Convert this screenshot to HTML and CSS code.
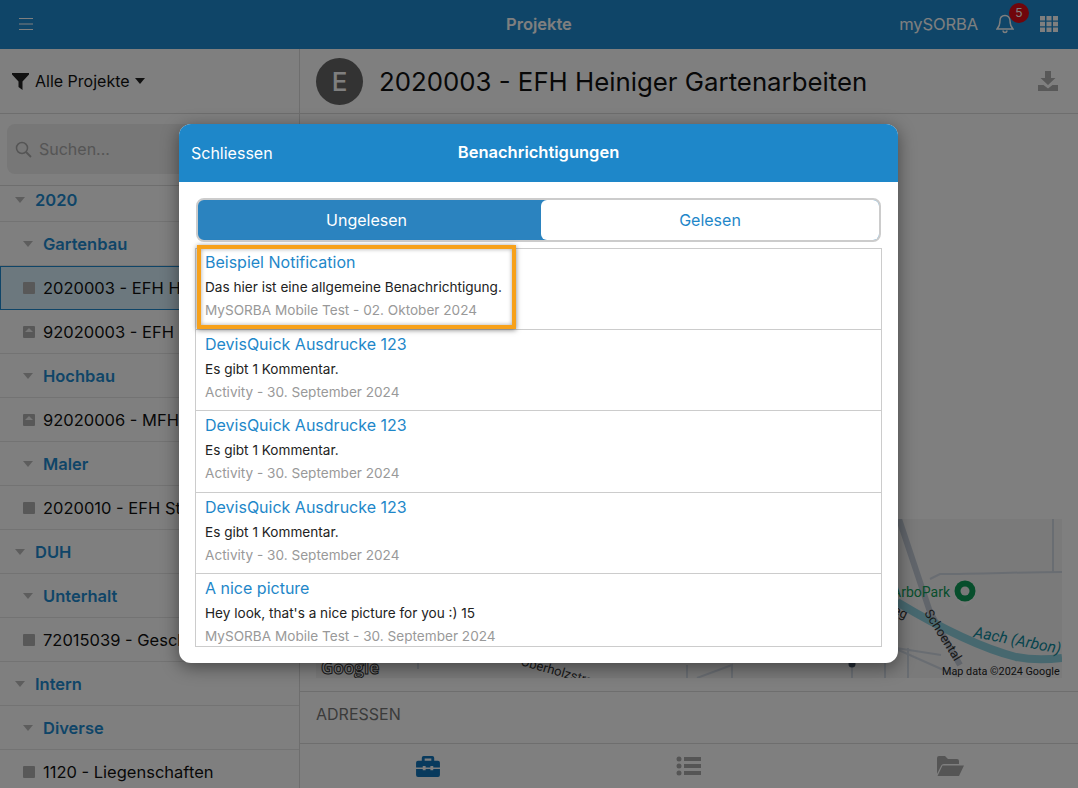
FILE: index.html
```html
<!DOCTYPE html>
<html lang="de">
<head>
<meta charset="utf-8">
<title>Projekte</title>
<link rel="stylesheet" href="styles.css">
</head>
<body>
<div class="app">
  <header class="topbar">
    <svg class="ic-menu" viewBox="0 0 14 12" width="14" height="12"><path d="M0 .5h14M0 6h14M0 11.5h14" stroke="#fff" stroke-width="1" fill="none"/></svg>
    <div class="topbar-title">Projekte</div>
    <div class="topbar-right">
      <span class="brand">mySORBA</span>
      <span class="bell">
        <svg viewBox="0 0 18 20" width="18" height="20"><path d="M9 1.500c-3.200 0-5 2.400-5 5.300 0 4.400-1 6-3 8.200h16c-2-2.200-3-3.800-3-8.200 0-2.900-1.800-5.300-5-5.300zM6.800 16.500c.3 1.300 1.200 2 2.200 2s1.900-.7 2.200-2" fill="none" stroke="#fff" stroke-width="1.400"/></svg>
        <span class="badge">5</span>
      </span>
      <svg class="ic-grid" viewBox="0 0 18 16" width="18" height="16"><path fill="#fff" d="M0 0h5v4.400H0zM6.500 0h5v4.400h-5zM13 0h5v4.400h-5zM0 5.800h5v4.400H0zM6.500 5.800h5v4.400h-5zM13 5.800h5v4.400h-5zM0 11.600h5V16H0zM6.500 11.600h5V16h-5zM13 11.600h5V16h-5z"/></svg>
    </div>
  </header>
  <div class="main">
    <aside class="sidebar">
      <div class="filter">
        <svg viewBox="0 0 17 17" width="17" height="17"><path fill="#222" d="M0 0h17v1.500L10.500 8.500V17L6.500 14V8.500L0 1.500z"/></svg>
        <span>Alle Projekte</span>
        <i class="caret"></i>
      </div>
      <div class="searchbar">
        <div class="searchbox">
          <svg viewBox="0 0 17 17" width="17" height="17"><circle cx="7" cy="7" r="5.500" fill="none" stroke="#aaa" stroke-width="1.500"/><path d="M11 11l5 5" stroke="#aaa" stroke-width="1.800"/></svg>
          <span>Suchen...</span>
        </div>
      </div>
      <ul class="tree">
        <li class="row l0"><i class="tri"></i><b>2020</b></li>
        <li class="row l1"><i class="tri"></i><b>Gartenbau</b></li>
        <li class="row l2 selected"><i class="sq"></i><span>2020003 - EFH Heiniger Gartenarbeiten</span></li>
        <li class="row l2"><i class="sq up"></i><span>92020003 - EFH Heiniger</span></li>
        <li class="row l1"><i class="tri"></i><b>Hochbau</b></li>
        <li class="row l2"><i class="sq up"></i><span>92020006 - MFH</span></li>
        <li class="row l1"><i class="tri"></i><b>Maler</b></li>
        <li class="row l2"><i class="sq"></i><span>2020010 - EFH St</span></li>
        <li class="row l0"><i class="tri"></i><b>DUH</b></li>
        <li class="row l1"><i class="tri"></i><b>Unterhalt</b></li>
        <li class="row l2"><i class="sq"></i><span>72015039 - Gesch</span></li>
        <li class="row l0"><i class="tri"></i><b>Intern</b></li>
        <li class="row l1"><i class="tri"></i><b>Diverse</b></li>
        <li class="row l2"><i class="sq"></i><span>1120 - Liegenschaften</span></li>
      </ul>
    </aside>
    <section class="detail">
      <div class="detail-head">
        <div class="avatar">E</div>
        <h1>2020003 - EFH Heiniger Gartenarbeiten</h1>
        <svg class="ic-dl" viewBox="0 0 20 20" width="20" height="20"><path fill="#b0b0b0" d="M7 0h6v7h4.500L10 14 2.500 7H7zM0 14h5.500L10 17.500 14.500 14H20v6H0z"/></svg>
      </div>
      <div class="detail-body">
        <div class="map">
          <svg viewBox="0 0 746 159" width="746" height="159">
            <rect width="746" height="159" fill="#f4f4f5"/>
            <path class="map-thin" d="M737 0v53M746 53c-40 0-80 2-122 2l-10 5M592 129v30M569 141v18M580 129l45 7M102 130v20M381 159l35-13v13M371 146v13M536 145v14M569 125l72 32"/>
            <path class="map-road-line" d="M583 0l31 93 30 53"/>
            <path class="map-river" d="M581 83c40 24 80 45 119 55 15 3 30 3 46 1"/>
            <text x="634" y="78" text-anchor="end" class="map-park">ArboPark</text>
            <path d="M639 78a11 11 0 1 1 20 0l-10 10z" fill="#fff" opacity=".5"/>
            <circle cx="649" cy="72" r="10.500" fill="#0f9d58"/><circle cx="649" cy="72" r="4.500" fill="#f0f0f0"/>
            <text class="map-water" transform="translate(657 118) rotate(11)">Aach (Arbon)</text>
            <text class="map-road" transform="translate(608 94) rotate(58)">Schoental</text>
            <text class="map-road" transform="translate(204 146) rotate(16)">Oberholzstrasse</text>
            <text class="map-road" x="589" y="100" text-anchor="end" transform="rotate(25 589 100)">Weg</text>
            <circle cx="536" cy="145" r="3.500" fill="#456"/>
            <text class="map-google" x="5" y="155">Google</text>
            <text class="map-copy" x="626" y="156">Map data ©2024 Google</text>
          </svg>
        </div>
      </div>
      <div class="addr">ADRESSEN</div>
      <nav class="tabs">
        <svg class="ic-tool" viewBox="0 0 25 22" width="24" height="21"><path fill="#1174ba" d="M8 0h9a2 2 0 0 1 2 2v3h4a2 2 0 0 1 2 2v5h-7v-1.500h-3V12H10v-1.500H7V12H0V7a2 2 0 0 1 2-2h4V2a2 2 0 0 1 2-2zm1 2.500V5h7V2.500zM0 13.500h7V15h3v-1.500h5V15h3v-1.500h7V20a2 2 0 0 1-2 2H2a2 2 0 0 1-2-2z"/></svg>
        <svg viewBox="0 0 25 20" width="25" height="20"><path fill="#aaa" d="M8 1h17v4H8zM8 8h17v4H8zM8 15h17v4H8z"/><circle cx="3" cy="3" r="2.500" fill="#aaa"/><circle cx="3" cy="10" r="2.500" fill="#aaa"/><circle cx="3" cy="17" r="2.500" fill="#aaa"/></svg>
        <svg class="ic-folder" viewBox="0 0 28 20" width="28" height="20"><path fill="#aaa" d="M1 18V2a2 2 0 0 1 2-2h6l3 3h9a2 2 0 0 1 2 2v3H8c-1.500 0-2.500.8-3 2zM6.500 9.500H28L23 20H1.500z"/></svg>
      </nav>
    </section>
  </div>
  <div class="scrim"></div>
  <div class="modal">
    <div class="modal-head">
      <span class="close">Schliessen</span>
      <span class="modal-title">Benachrichtigungen</span>
    </div>
    <div class="modal-body">
      <div class="segment">
        <div class="seg active">Ungelesen</div>
        <div class="seg other">Gelesen</div>
      </div>
      <div class="list">
        <div class="item">
          <div class="t">Beispiel Notification</div>
          <div class="b">Das hier ist eine allgemeine Benachrichtigung.</div>
          <div class="m">MySORBA Mobile Test - 02. Oktober 2024</div>
        </div>
        <div class="item">
          <div class="t">DevisQuick Ausdrucke 123</div>
          <div class="b">Es gibt 1 Kommentar.</div>
          <div class="m">Activity - 30. September 2024</div>
        </div>
        <div class="item">
          <div class="t">DevisQuick Ausdrucke 123</div>
          <div class="b">Es gibt 1 Kommentar.</div>
          <div class="m">Activity - 30. September 2024</div>
        </div>
        <div class="item">
          <div class="t">DevisQuick Ausdrucke 123</div>
          <div class="b">Es gibt 1 Kommentar.</div>
          <div class="m">Activity - 30. September 2024</div>
        </div>
        <div class="item">
          <div class="t">A nice picture</div>
          <div class="b">Hey look, that's a nice picture for you :) 15</div>
          <div class="m">MySORBA Mobile Test - 30. September 2024</div>
        </div>
      </div>
    </div>
    <div class="callout"></div>
  </div>
</div>
</body>
</html>
```
FILE: styles.css
```css
* { box-sizing: border-box; }
html, body { margin: 0; height: 100%; }
body { font-family: Inter, "Noto Sans", "Liberation Sans", sans-serif; color: #111; background: #fff; overflow: hidden; }
.app { position: relative; width: 1078px; height: 788px; overflow: hidden; display: flex; flex-direction: column; }

.topbar { height: 49px; flex: none; background: #1e8bd0; display: flex; align-items: center; padding: 0 20px 1px 19px; position: relative; color: #fff; }
.topbar-title { position: absolute; left: 0; right: 0; text-align: center; font-size: 16.500px; font-weight: 600; pointer-events: none; }
.topbar-right { margin-left: auto; display: flex; align-items: center; }
.brand { font-size: 16.500px; letter-spacing: -.1px; margin-right: 18px; }
.bell { position: relative; display: flex; margin-right: 26px; }
.badge { position: absolute; left: 13px; top: -11px; width: 20px; height: 20px; border-radius: 50%; background: #e00a16; font-size: 12px; line-height: 20px; text-align: center; color: #fff; }

.main { flex: 1; display: flex; min-height: 0; }
.sidebar { width: 300px; flex: none; border-right: 1px solid #ddd; display: flex; flex-direction: column; overflow: hidden; }
.filter { height: 65px; flex: none; border-bottom: 1px solid #ddd; display: flex; align-items: center; padding: 0 0 0 12px; font-size: 16px; }
.filter span { margin-left: 6px; }
.caret { width: 0; height: 0; margin-left: 5px; border: 5.500px solid transparent; border-top: 6px solid #222; border-bottom: 0; }
.searchbar { height: 72px; flex: none; padding: 10px 0 0 7px; border-bottom: 1px solid #ddd; }
.searchbox { height: 50px; background: #eee; border-radius: 8px; display: flex; align-items: center; padding-left: 8px; color: #aaa; font-size: 16px; }
.searchbox span { margin-left: 7px; }
.tree { list-style: none; margin: -8px 0 0; padding: 0; }
.row { height: 44px; border-bottom: 1px solid #e6e6e6; display: flex; align-items: center; white-space: nowrap; font-size: 16.500px; }
.row b { font-weight: 600; color: #1e8bd0; }
.l0 { padding-left: 15px; }
.l1 { padding-left: 23px; }
.l2 { padding-left: 23px; }
.tri { width: 0; height: 0; border: 5.500px solid transparent; border-top: 6px solid #bbb; border-bottom: 0; margin-right: 9px; }
.row .tri + b { margin-left: 1px; }
.sq { width: 12px; height: 12px; border-radius: 1px; background: #b0b0b0; margin-right: 8px; position: relative; flex: none; }
.sq.up::after { content: ""; position: absolute; left: 1.500px; top: 2.500px; border: 4.500px solid transparent; border-bottom: 4.500px solid #eee; border-top: 0; }
.selected { background: #d8f0fc; border: 1px solid #1e8bd0; padding-left: 22px; }

.detail { flex: 1; display: flex; flex-direction: column; min-width: 0; }
.detail-head { height: 65px; flex: none; border-bottom: 1px solid #ddd; display: flex; align-items: center; padding: 0 20px 0 16px; }
.avatar { width: 47px; height: 47px; border-radius: 50%; background: #666; color: #fff; font-size: 26px; font-weight: 500; text-align: center; line-height: 47px; flex: none; }
.detail-head h1 { margin: 0 0 0 16px; font-size: 25.800px; font-weight: 400; color: #111; flex: 1; white-space: nowrap; }
.detail-body { flex: 1; min-height: 0; padding: 0 16px 13px; display: flex; flex-direction: column; justify-content: flex-end; border-bottom: 1px solid #ddd; }
.map { height: 159px; overflow: hidden; }
.map svg { display: block; }
.map-thin { fill: none; stroke: #d3dae4; stroke-width: 2; }
.map-road-line { fill: none; stroke: #c3cbd6; stroke-width: 6; }
.map-river { fill: none; stroke: #8fd0de; stroke-width: 8; }
.map-park { font-size: 14px; fill: #0f9d58; font-family: Roboto, sans-serif; }
.map-water { font-size: 15.500px; fill: #0f8a9c; font-style: italic; font-family: Roboto, sans-serif; }
.map-road { font-size: 13px; fill: #333; font-family: Roboto, sans-serif; }
.map-google { font-size: 17px; font-weight: 700; fill: #fff; stroke: #333; stroke-width: 1; font-family: "Open Sans", sans-serif; }
.map-copy { font-size: 10.800px; fill: #222; font-family: Roboto, sans-serif; }
.addr { height: 52px; flex: none; border-bottom: 1px solid #ddd; display: flex; align-items: center; padding: 0 0 8px 16px; font-size: 16px; color: #777; }
.tabs { height: 44px; flex: none; display: grid; grid-template-columns: repeat(3, 1fr); place-items: center; }
.ic-tool { margin-right: 3px; }
.ic-folder { margin-left: 3px; }

.scrim { position: absolute; inset: 0; background: rgba(0, 0, 0, .5); }
.modal { position: absolute; left: 179px; top: 124px; width: 719px; height: 539px; background: #fff; border-radius: 12px; box-shadow: 0 4px 18px rgba(0, 0, 0, .45); display: flex; flex-direction: column; }
.modal-head { height: 58px; flex: none; background: #1e87c9; color: #fff; border-radius: 12px 12px 0 0; display: flex; align-items: center; justify-content: center; position: relative; }
.close { position: absolute; left: 12px; top: 19px; font-size: 16px; }
.modal-title { font-size: 16.500px; font-weight: 600; margin-top: -3px; }
.modal-body { flex: 1; min-height: 0; display: flex; flex-direction: column; padding: 16px; }
.segment { height: 44px; flex: none; margin: 0 1px; border: 2px solid #ccc; border-radius: 8px; background: #2b83bf; display: grid; grid-template-columns: 343px 1fr; font-size: 16px; overflow: hidden; }
.seg { display: flex; align-items: center; justify-content: center; padding-bottom: 1px; }
.seg.active { color: #fff; padding-right: 6px; }
.seg.other { background: #fff; color: #1e87c9; border-radius: 6px 0 0 6px; }
.list { margin-top: 6px; flex: 1; min-height: 0; border: 1px solid #ccc; overflow: hidden; }
.item { height: 81.500px; border-bottom: 1px solid #ccc; padding: 3px 9px 0; }
.item:first-child { margin-top: -1px; }
.t { font-size: 16px; color: #1e87c9; line-height: 22px; }
.b { font-size: 13.600px; color: #222; line-height: 20px; margin-top: 4px; }
.m { font-size: 13.600px; color: #999; line-height: 20px; margin-top: 3px; }
.callout { position: absolute; left: 18px; top: 121px; width: 319px; height: 84px; border: 4px solid #f7a11a; box-shadow: 0 1px 5px rgba(0, 0, 0, .5), inset 0 0 4px rgba(0, 0, 0, .35); }
```
